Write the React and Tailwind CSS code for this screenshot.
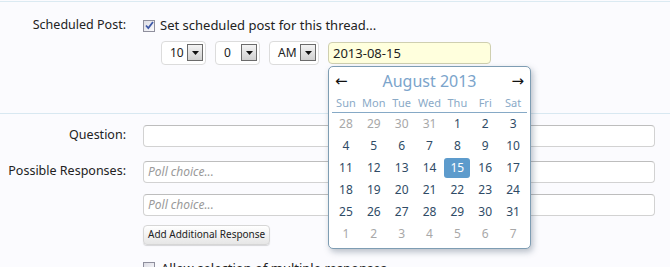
import React from "react";

const font = { fontFamily: "'Noto Sans', 'DejaVu Sans', sans-serif" };

const weeks = [
  [28, 29, 30, 31, 1, 2, 3],
  [4, 5, 6, 7, 8, 9, 10],
  [11, 12, 13, 14, 15, 16, 17],
  [18, 19, 20, 21, 22, 23, 24],
  [25, 26, 27, 28, 29, 30, 31],
  [1, 2, 3, 4, 5, 6, 7],
];

function SelectBox({ value, width }) {
  return (
    <div className={`flex h-[24px] items-center justify-between rounded-[4px] border border-[#dcdcdc] bg-white pl-[8px] pr-[2px] ${width}`}>
      <span className="text-[12px] text-[#222]">{value}</span>
      <span className="flex h-[17px] w-[16px] items-center justify-center border border-[#6b6b6b] bg-gradient-to-b from-[#f4f4f4] to-[#d0d0d0]">
        <svg width="7" height="4" viewBox="0 0 7 4"><path d="M0 0h7L3.5 4z" fill="#111" /></svg>
      </span>
    </div>
  );
}

function Checkbox({ checked }) {
  return (
    <span className="flex h-[12px] w-[12px] items-center justify-center border border-[#8f8f9d] bg-gradient-to-br from-[#dcdce4] to-[#fbfbfd]">
      {checked && (
        <svg width="9" height="9" viewBox="0 0 9 9"><path d="M1 4.5l2.3 2.5L8 1" stroke="#3e59a8" strokeWidth="1.8" fill="none" /></svg>
      )}
    </span>
  );
}

function Calendar() {
  return (
    <div className="absolute left-0 top-[24px] z-10 w-[203px] rounded-[5px] border border-[#7e9db3] bg-white px-[3px] pb-[3px] shadow-[2px_3px_6px_rgba(60,80,100,0.35)]">
      <div className="flex h-[28px] items-center justify-between px-[3px]">
        <span className="text-[15px] leading-none text-[#111]">←</span>
        <span className="text-[16px] text-[#7ba4cb]">August 2013</span>
        <span className="text-[15px] leading-none text-[#111]">→</span>
      </div>
      <div className="grid grid-cols-7 border-b border-[#86a9c6] pb-[1px]">
        {["Sun", "Mon", "Tue", "Wed", "Thu", "Fri", "Sat"].map((d) => (
          <span key={d} className="text-center text-[11px] text-[#8aaac7]">{d}</span>
        ))}
      </div>
      <div>
        {weeks.map((w, i) => (
          <div key={i} className="grid h-[22px] grid-cols-7">
            {w.map((d, j) => {
              const other = (i === 0 && d > 7) || i === 5;
              const sel = i === 2 && d === 15;
              return (
                <span
                  key={j}
                  className={`mx-px my-px flex items-center justify-center rounded-[3px] text-[12px] ${
                    sel ? "bg-[#5d9bcc] text-white" : other ? "text-[#a8a8a8]" : "text-[#2f4b66]"
                  }`}
                >
                  {d}
                </span>
              );
            })}
          </div>
        ))}
      </div>
    </div>
  );
}

function Input({ placeholder }) {
  return (
    <div className="h-[22px] w-[512px] rounded-[4px] border border-[#d2d2d2] border-t-[#bdbdbd] bg-white px-[4px] text-[12px] italic leading-[20px] text-[#9a9a9a]">
      {placeholder}
    </div>
  );
}

export default function App() {
  return (
    <div className="relative h-[267px] w-[670px] overflow-hidden bg-[#fbfbfe] text-[#222]" style={font}>
      <div className="mt-px border-t border-[#dbeaf2]" />
      <div className="border-b border-[#d8e8f1] pb-[48px] pt-[14px]">
        <div className="flex items-center">
          <div className="w-[126px] text-right text-[12.5px]">Scheduled Post:</div>
          <div className="ml-[17px] flex items-center gap-[5px]">
            <Checkbox checked />
            <span className="text-[13px]">Set scheduled post for this thread...</span>
          </div>
        </div>
        <div className="ml-[161px] mt-[5px] flex items-center gap-[9px]">
          <SelectBox value="10" width="w-[45px]" />
          <SelectBox value="0" width="w-[45px]" />
          <SelectBox value="AM" width="w-[50px]" />
          <div className="relative">
            <div className="h-[22px] w-[163px] rounded-[4px] border border-[#cfcfb0] bg-[#ffffdd] px-[4px] text-[13px] leading-[20px]">
              2013-08-15
            </div>
            <Calendar />
          </div>
        </div>
      </div>
      <div className="flex flex-col gap-[14px] pt-[11px]">
        <div className="flex items-center">
          <div className="w-[126px] text-right text-[12.5px]">Question:</div>
          <div className="ml-[17px]"><Input /></div>
        </div>
        <div className="flex items-center">
          <div className="w-[126px] text-right text-[12.5px]">Possible Responses:</div>
          <div className="ml-[17px]"><Input placeholder="Poll choice..." /></div>
        </div>
      </div>
      <div className="ml-[143px] mt-[11px] flex flex-col items-start">
        <Input placeholder="Poll choice..." />
        <button className="mt-[9px] h-[20px] rounded-[4px] border border-[#d6d6d6] bg-gradient-to-b from-white to-[#e6e6e6] px-[4px] text-[10px] text-[#222] shadow-[0_1px_1px_rgba(0,0,0,0.15)]">
          Add Additional Response
        </button>
        <div className="mt-[14px] flex items-center gap-[6px]">
          <Checkbox />
          <span className="text-[13px]">Allow selection of multiple responses</span>
        </div>
      </div>
    </div>
  );
}
